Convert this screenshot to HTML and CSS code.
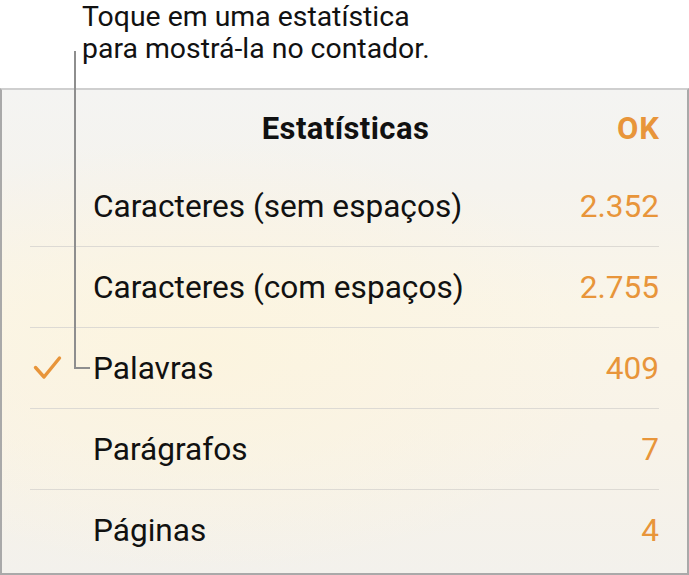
FILE: index.html
```html
<!DOCTYPE html>
<html lang="pt">
<head>
<meta charset="utf-8">
<link rel="stylesheet" href="styles.css">
</head>
<body>
<div class="page">
  <p class="callout">Toque em uma estatística<br>para mostrá-la no contador.</p>
  <section class="panel">
    <header class="panel-head">
      <span class="spacer"></span>
      <h1 class="title">Estatísticas</h1>
      <span class="done">OK</span>
    </header>
    <ul class="stats">
      <li class="row"><span class="check"></span><span class="label">Caracteres (sem espaços)</span><span class="value">2.352</span></li>
      <li class="row"><span class="check"></span><span class="label">Caracteres (com espaços)</span><span class="value">2.755</span></li>
      <li class="row"><span class="check"><svg class="tick" width="30" height="26" viewBox="0 0 30 26"><path d="M2.5 12.5 L11 22 L26.5 3" fill="none" stroke="#e8953a" stroke-width="3.4" stroke-linecap="round" stroke-linejoin="round"/></svg></span><span class="label">Palavras</span><span class="value">409</span></li>
      <li class="row"><span class="check"></span><span class="label">Parágrafos</span><span class="value">7</span></li>
      <li class="row last"><span class="check"></span><span class="label">Páginas</span><span class="value">4</span></li>
    </ul>
  </section>
  <svg class="leader" width="689" height="575" viewBox="0 0 689 575"><path d="M75 51 V368 H90" fill="none" stroke="#8e8e8e" stroke-width="2"/></svg>
</div>
</body>
</html>
```
FILE: styles.css
```css
html, body {
  margin: 0;
  padding: 0;
  background: #ffffff;
}
body {
  font-family: Roboto, "Liberation Sans", Arial, sans-serif;
  color: #000;
}
.page {
  position: relative;
  width: 689px;
  height: 575px;
  overflow: hidden;
  display: flex;
  flex-direction: column;
}
.callout {
  margin: 0;
  padding: 1px 0 0 82px;
  height: 88px;
  box-sizing: border-box;
  font-size: 28.4px;
  line-height: 32px;
  color: #111;
}
.panel {
  flex: 1;
  box-sizing: border-box;
  border: 2px solid #a9a9a9;
  border-top: 2px solid #cfcfcf;
  background:
    radial-gradient(ellipse 60% 45% at 30% 55%, rgba(252, 244, 222, 0.9), rgba(252, 244, 222, 0) 100%),
    linear-gradient(180deg, #f4f4f2 0%, #f5f3ee 20%, #faf5e8 45%, #f8f3e8 70%, #f3f1ec 100%);
  display: flex;
  flex-direction: column;
}
.panel-head {
  height: 76px;
  display: grid;
  grid-template-columns: 1fr auto 1fr;
  align-items: center;
  padding: 0 28px 0 30px;
}
.title {
  margin: 0;
  font-size: 31px;
  font-weight: 700;
  letter-spacing: 0.4px;
  color: #111;
}
.done {
  justify-self: end;
  font-size: 31px;
  font-weight: 700;
  letter-spacing: 1px;
  margin-right: -1px;
  color: #e8953a;
}
.stats {
  list-style: none;
  margin: 0 28px 0 28px;
  padding: 0;
}
.row {
  height: 80px;
  display: flex;
  align-items: center;
  border-bottom: 1px solid #dddad4;
  font-size: 31.6px;
}
.row.last {
  border-bottom: none;
}
.check {
  width: 63px;
  flex: none;
  display: flex;
  align-items: center;
  padding-left: 3px;
  box-sizing: border-box;
}
.label {
  flex: 1;
  color: #111;
}
.value {
  color: #e8953a;
}
.leader {
  position: absolute;
  left: 0;
  top: 0;
  pointer-events: none;
}
```
